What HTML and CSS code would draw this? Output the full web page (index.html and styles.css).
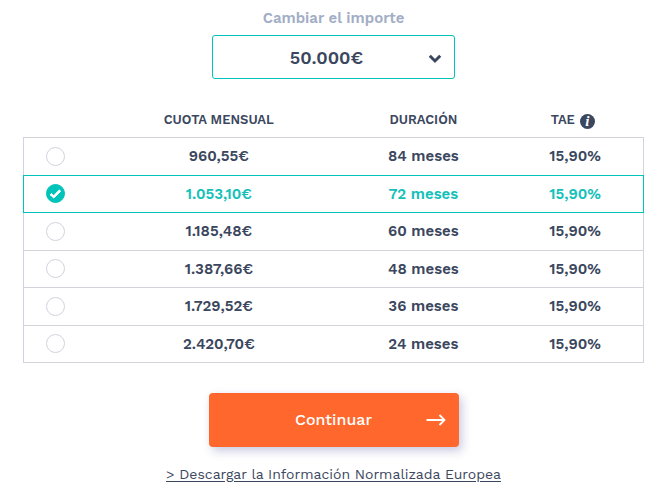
FILE: index.html
```
<!DOCTYPE html>
<html lang="es">
<head>
    <meta charset="UTF-8">
    <meta name="viewport" content="width=device-width, initial-scale=1.0">
    <title>Cambiar el importe</title>
    <link rel="stylesheet" href="styles.css">
</head>
<body>
    <form class="simulator">
        <label class="amount-label" for="amount">Cambiar el importe</label>
        <div class="amount-box">
            <select id="amount" class="amount">
                <option selected>50.000€</option>
            </select>
            <svg class="chevron" viewBox="0 0 14 10" aria-hidden="true">
                <path d="M1.8 1.8 L7 7 L12.2 1.8" />
            </svg>
        </div>

        <table class="fees">
            <thead>
                <tr>
                    <th class="col-check"></th>
                    <th class="col-fee">CUOTA MENSUAL</th>
                    <th class="col-term">DURACIÓN</th>
                    <th class="col-tae">TAE <button type="button" class="info">i</button></th>
                </tr>
            </thead>
            <tbody>
                <tr>
                    <td class="check"><input type="radio" name="fee" id="fee84"></td>
                    <td><label for="fee84">960,55€</label></td>
                    <td>84 meses</td>
                    <td>15,90%</td>
                </tr>
                <tr class="selected">
                    <td class="check"><input type="radio" name="fee" id="fee72" checked></td>
                    <td><label for="fee72">1.053,10€</label></td>
                    <td>72 meses</td>
                    <td>15,90%</td>
                </tr>
                <tr>
                    <td class="check"><input type="radio" name="fee" id="fee60"></td>
                    <td><label for="fee60">1.185,48€</label></td>
                    <td>60 meses</td>
                    <td>15,90%</td>
                </tr>
                <tr>
                    <td class="check"><input type="radio" name="fee" id="fee48"></td>
                    <td><label for="fee48">1.387,66€</label></td>
                    <td>48 meses</td>
                    <td>15,90%</td>
                </tr>
                <tr>
                    <td class="check"><input type="radio" name="fee" id="fee36"></td>
                    <td><label for="fee36">1.729,52€</label></td>
                    <td>36 meses</td>
                    <td>15,90%</td>
                </tr>
                <tr>
                    <td class="check"><input type="radio" name="fee" id="fee24"></td>
                    <td><label for="fee24">2.420,70€</label></td>
                    <td>24 meses</td>
                    <td>15,90%</td>
                </tr>
            </tbody>
        </table>

        <button type="submit" class="continue">
            <span>Continuar</span>
            <svg class="arrow" viewBox="0 0 20 12" aria-hidden="true">
                <path d="M0.5 6 H18.5 M13.5 1 L18.5 6 L13.5 11" />
            </svg>
        </button>
        <a class="download" href="#">&gt; Descargar la Información Normalizada Europea</a>
    </form>
</body>
</html>
```
FILE: styles.css
```
* {
    box-sizing: border-box;
}
body {
    margin: 0;
    background: #fff;
    color: #3b475e;
    font-family: "Work Sans", Inter, sans-serif;
}
.simulator {
    display: flex;
    flex-direction: column;
    align-items: center;
    padding: 8px 24px 16px 23px;
}
.amount-label {
    color: #a3aec6;
    font-size: 15px;
    font-weight: 600;
    line-height: 20px;
    margin-bottom: 7px;
}
.amount-box {
    position: relative;
    width: 243px;
}
.amount {
    display: block;
    width: 100%;
    height: 44px;
    padding: 0 30px 0 16px;
    appearance: none;
    background: #fff;
    border: 1px solid #00c3b9;
    border-radius: 3px;
    color: inherit;
    font-family: inherit;
    font-size: 18px;
    font-weight: 600;
    text-align: center;
    text-align-last: center;
}
.chevron {
    position: absolute;
    right: 13px;
    top: 19px;
    width: 14px;
    height: 10px;
    pointer-events: none;
}
.chevron path {
    fill: none;
    stroke: #3b475e;
    stroke-width: 3;
}
.fees {
    width: 100%;
    margin-top: 22px;
    border-collapse: collapse;
    table-layout: fixed;
    text-align: center;
}
.fees th {
    height: 36px;
    padding: 11px 0 0;
    font-size: 13px;
    font-weight: 600;
    line-height: 15px;
    vertical-align: baseline;
}
.col-check {
    width: 12%;
}
.col-fee {
    width: 39%;
}
.col-term {
    width: 27%;
}
.col-tae {
    width: 22%;
}
.fees .col-tae {
    padding-right: 5px;
}
.info {
    width: 15px;
    height: 15px;
    margin-left: 1px;
    padding: 0;
    border: 0;
    border-radius: 50%;
    background: #3b475e;
    color: #fff;
    font: italic bold 15px/15px "Liberation Serif", serif;
    vertical-align: -2px;
}
.fees tbody tr {
    height: 38px;
    border: 1px solid #d2d3dd;
}
.fees tbody tr:nth-child(even) {
    height: 37px;
}
.fees td {
    padding: 0;
    font-size: 15px;
    font-weight: 600;
    line-height: 20px;
}
.fees .check {
    padding-left: 22px;
    text-align: left;
}
.check input {
    display: block;
    width: 19px;
    height: 19px;
    margin: 0;
    appearance: none;
    border: 1px solid #d2d3dd;
    border-radius: 50%;
}
.check input:checked {
    display: grid;
    place-items: center;
    border-color: #00c3b9;
    background: #00c3b9;
}
/* tick inside the selected circle */
.check input:checked::before {
    content: "";
    width: 8px;
    height: 3px;
    margin-bottom: 2px;
    border: solid #fff;
    border-width: 0 0 3px 3px;
    border-radius: 1px;
    transform: rotate(-45deg);
}
.selected td {
    border-top: 1px solid #00c3b9;
    border-bottom: 1px solid #00c3b9;
    color: #14c1b9;
}
.selected td:first-child {
    border-left: 1px solid #00c3b9;
}
.selected td:last-child {
    border-right: 1px solid #00c3b9;
}
.continue {
    display: grid;
    grid-template-columns: 20px 1fr 20px;
    align-items: center;
    width: 250px;
    height: 54px;
    margin-top: 30px;
    padding: 0 13px;
    border: 0;
    border-radius: 4px;
    background: #ff672d;
    box-shadow: 3px 4px 10px rgba(80, 80, 160, 0.3);
    color: #fff;
    font-family: inherit;
    font-size: 16px;
    font-weight: 500;
    cursor: pointer;
}
.continue span {
    grid-column: 2;
}
.arrow {
    width: 20px;
    height: 12px;
}
.arrow path {
    fill: none;
    stroke: #fff;
    stroke-width: 1.8;
}
.download {
    margin-top: 17px;
    color: #3b475e;
    font-size: 14px;
    line-height: 20px;
    text-underline-offset: 2px;
}
```
